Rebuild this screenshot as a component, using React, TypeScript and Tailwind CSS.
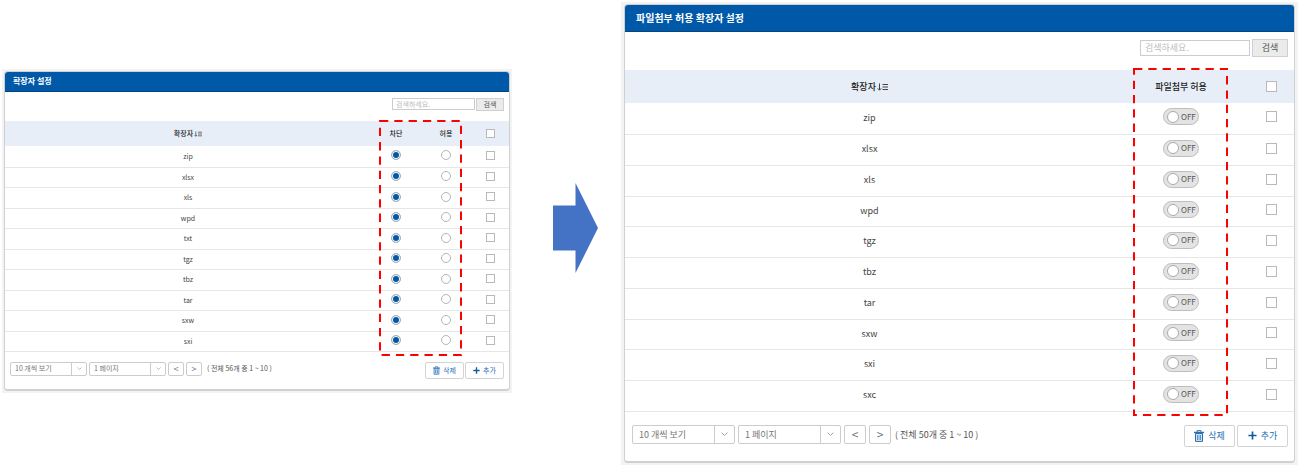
import { useState } from "react";
import clsx from "clsx";

const BLOCK_EXTENSIONS = ["zip", "xlsx", "xls", "wpd", "txt", "tgz", "tbz", "tar", "sxw", "sxi"];
const ALLOW_EXTENSIONS = ["zip", "xlsx", "xls", "wpd", "tgz", "tbz", "tar", "sxw", "sxi", "sxc"];

const check =
  "block mx-auto appearance-none border border-[#b9b9b9] bg-white checked:bg-[#0059a8]";

function SortIcon({ className }: { className: string }) {
  return (
    <svg viewBox="0 0 11 8" fill="none" stroke="#444" className={className} aria-hidden="true">
      <path d="M2.5 0.5V7M0.7 5.3L2.5 7.2L4.3 5.3" />
      <path d="M5.5 1.5H11M5.5 4H11M5.5 6.5H11" />
    </svg>
  );
}

function TrashIcon({ className }: { className: string }) {
  return (
    <svg viewBox="0 0 10 12" fill="none" stroke="#2470b3" className={className} aria-hidden="true">
      <path d="M1.5 3.5H8.5V11.4H1.5Z" fill="#d5e5f3" />
      <path d="M0 2.5H10" strokeWidth="1.4" />
      <path d="M3 2V0.7H7V2" />
      <path d="M3.8 5V10M6.2 5V10" />
    </svg>
  );
}

function PlusIcon({ className }: { className: string }) {
  return (
    <svg viewBox="0 0 10 10" fill="none" stroke="#0f5ca5" strokeWidth="1.9" className={className} aria-hidden="true">
      <path d="M5 0.5V9.5M0.5 5H9.5" />
    </svg>
  );
}

function Highlight({ className }: { className: string }) {
  return (
    <svg className={clsx("pointer-events-none absolute overflow-visible", className)} aria-hidden="true">
      <rect width="100%" height="100%" fill="none" stroke="#f00" strokeWidth="2" strokeDasharray="8.3 6" />
    </svg>
  );
}

function Panel({ title, compact, children }: { title: string; compact?: boolean; children: React.ReactNode }) {
  return (
    <div className={clsx("bg-[#f3f3f3]", compact ? "p-0.5" : "px-[3px] py-0.5")}>
      <section className="overflow-hidden rounded border border-b-2 border-[#d0d0d0] bg-white">
        <h2
          className={clsx(
            "-mx-px -mt-px flex items-center border-b border-[#07457c] bg-[#0059a8] font-bold text-white",
            compact ? "h-[21px] px-[9px] text-[8px]" : "h-7 px-3 text-[10px]"
          )}
        >
          {title}
        </h2>
        {children}
      </section>
    </div>
  );
}

function SearchBar({ compact }: { compact?: boolean }) {
  return (
    <form
      onSubmit={(e) => e.preventDefault()}
      className={clsx(
        "flex items-center justify-end text-[#555]",
        compact ? "h-[29px] gap-px pb-[5px] pr-[5px] text-[7px]" : "h-[38px] gap-0.5 pb-[7px] pr-1.5 text-[9px]"
      )}
    >
      <input
        type="text"
        aria-label="검색어"
        placeholder="검색하세요."
        className={clsx(
          "border border-[#ccc] bg-white placeholder:text-[#bbb]",
          compact ? "h-3 w-[83px] px-[3px]" : "h-4 w-[110px] px-1"
        )}
      />
      <button
        type="submit"
        className={clsx("border border-[#d0d0d0] bg-[#ebebeb] leading-none", compact ? "h-[13px] w-7" : "h-[18px] w-9")}
      >
        검색
      </button>
    </form>
  );
}

function PageSelect({ label, text, compact }: { label: string; text: string; compact?: boolean }) {
  return (
    <div
      className={clsx(
        "relative rounded-xs border border-[#ccc] text-[#777]",
        compact ? "h-[14px] w-[77px]" : "h-[19px] w-[103px]"
      )}
    >
      <select
        aria-label={label}
        className={clsx("block h-full w-full appearance-none bg-transparent leading-none", compact ? "pl-1" : "pl-1.5")}
      >
        <option>{text}</option>
      </select>
      <span
        className={clsx(
          "pointer-events-none absolute inset-y-0 right-0 flex items-center justify-center border-l border-[#ccc]",
          compact ? "w-[15px]" : "w-5"
        )}
      >
        <svg viewBox="0 0 8 5" fill="none" stroke="#999" className={compact ? "w-[5px]" : "w-[7px]"} aria-hidden="true">
          <path d="M0.7 0.7L4 4L7.3 0.7" />
        </svg>
      </span>
    </div>
  );
}

function Footer({ total, compact }: { total: number; compact?: boolean }) {
  const nav = clsx(
    "flex items-center justify-center rounded-xs border border-[#ccc] text-[#777]",
    compact ? "h-[14px] w-4 text-[9px]" : "h-[19px] w-[22px] text-[12px]"
  );
  const action = clsx(
    "flex items-center justify-center rounded-xs border border-[#d3d3d3] text-[#2470b3]",
    compact ? "h-[17px] w-[39px] gap-[3px]" : "h-[22px] w-[51px] gap-1"
  );
  return (
    <div
      className={clsx(
        "flex items-start justify-between",
        compact ? "h-[37px] px-[5px] pt-2.5 text-[7px]" : "h-[49px] pl-[7px] pr-1.5 pt-[13px] text-[9px]"
      )}
    >
      <div className={clsx("flex items-center", compact ? "gap-0.5" : "gap-[3px]")}>
        <PageSelect label="목록 개수" text="10 개씩 보기" compact={compact} />
        <PageSelect label="페이지" text="1 페이지" compact={compact} />
        <button type="button" aria-label="이전" className={nav}>
          &lt;
        </button>
        <button type="button" aria-label="다음" className={nav}>
          &gt;
        </button>
        <p className={clsx("text-[#555]", compact ? "pl-[3px]" : "pl-px")}>( 전체 {total}개 중 1 ~ 10 )</p>
      </div>
      <div className={clsx("flex", compact ? "gap-px" : "gap-0.5")}>
        <button type="button" className={action}>
          <TrashIcon className={compact ? "h-[9px] w-[7px]" : "h-3 w-2.5"} />
          삭제
        </button>
        <button type="button" className={action}>
          <PlusIcon className={compact ? "size-[7px]" : "size-[9px]"} />
          추가
        </button>
      </div>
    </div>
  );
}

function BlockRow({ name }: { name: string }) {
  const [mode, setMode] = useState("block");
  return (
    <tr className="border-b border-[#e6e6e6] odd:h-[21px] even:h-5">
      <td>{name}</td>
      {["block", "allow"].map((m) => (
        <td key={m} className="pb-0.5">
          <input
            type="radio"
            name={`mode-${name}`}
            aria-label={`${name} ${m === "block" ? "차단" : "허용"}`}
            checked={mode === m}
            onChange={() => setMode(m)}
            className="mx-auto block size-2.5 appearance-none rounded-full border border-[#b5b5b5] bg-white checked:bg-[#0059a8] checked:shadow-[inset_0_0_0_1px_white]"
          />
        </td>
      ))}
      <td className="pb-0.5">
        <input type="checkbox" aria-label={`${name} 선택`} className={clsx(check, "size-[9px]")} />
      </td>
    </tr>
  );
}

function AllowRow({ name }: { name: string }) {
  const [on, setOn] = useState(false);
  return (
    <tr className="h-[31px] border-b border-[#e6e6e6] nth-[4n]:h-[30px]">
      <td className="pb-0.5">{name}</td>
      <td className="pb-[3px]">
        <label className="mx-auto flex h-[17px] w-9 items-center gap-0.5 rounded-full border border-[#bdbdbd] bg-[#e3e3e3] px-[3px] text-[8px] text-[#555]">
          <input
            type="checkbox"
            role="switch"
            aria-label={`${name} 파일첨부 허용`}
            checked={on}
            onChange={() => setOn(!on)}
            className="size-3 shrink-0 appearance-none rounded-full border border-[#aaa] bg-white"
          />
          {on ? "ON" : "OFF"}
        </label>
      </td>
      <td className="pb-[3px]">
        <input type="checkbox" aria-label={`${name} 선택`} className={clsx(check, "size-[11px]")} />
      </td>
    </tr>
  );
}

export default function App() {
  return (
    <main className="flex items-start bg-white pl-0.5 pr-[7px] pt-0.5 font-['Noto_Sans_CJK_KR',sans-serif] leading-none">
      <div className="mt-[67px] min-w-0 flex-[510]">
        <Panel title="확장자 설정" compact>
          <SearchBar compact />
          <div className="relative">
            <table className="w-full table-fixed border-collapse text-center text-[7px] text-[#444]">
              <thead className="bg-[#e7eef7] text-[#222]">
                <tr className="h-[25px]">
                  <th className="font-medium">
                    <span className="inline-flex items-center gap-px">
                      확장자
                      <SortIcon className="h-[6px] w-2" />
                    </span>
                  </th>
                  <th className="w-[50px] font-medium">차단</th>
                  <th className="w-[50px] font-medium">허용</th>
                  <th className="w-[38px]">
                    <input type="checkbox" aria-label="전체 선택" className={clsx(check, "size-[9px]")} />
                  </th>
                </tr>
              </thead>
              <tbody>
                {BLOCK_EXTENSIONS.map((name) => (
                  <BlockRow key={name} name={name} />
                ))}
              </tbody>
            </table>
            <Highlight className="right-12 top-0 h-[234px] w-[81px]" />
          </div>
          <Footer total={56} compact />
        </Panel>
      </div>

      <svg viewBox="0 0 45 90" className="ml-[41px] mr-[23px] mt-[181px] h-[90px] w-[45px] shrink-0" aria-hidden="true">
        <path d="M0 22.5H22.5V0L45 45L22.5 90V67.5H0Z" fill="#4472c4" />
      </svg>

      <div className="min-w-0 flex-[677]">
        <Panel title="파일첨부 허용 확장자 설정">
          <SearchBar />
          <div className="relative">
            <table className="w-full table-fixed border-collapse text-center text-[9px] text-[#444]">
              <thead className="bg-[#e7eef7] text-[#222]">
                <tr className="h-[33px]">
                  <th className="font-medium">
                    <span className="inline-flex items-center gap-px">
                      확장자
                      <SortIcon className="h-2 w-[11px]" />
                    </span>
                  </th>
                  <th className="w-[134px] font-medium">파일첨부 허용</th>
                  <th className="w-[46px]">
                    <input type="checkbox" aria-label="전체 선택" className={clsx(check, "size-[11px]")} />
                  </th>
                </tr>
              </thead>
              <tbody>
                {ALLOW_EXTENSIONS.map((name) => (
                  <AllowRow key={name} name={name} />
                ))}
              </tbody>
            </table>
            <Highlight className="-top-px right-[67px] h-[346px] w-[93px]" />
          </div>
          <Footer total={50} />
        </Panel>
      </div>
    </main>
  );
}
